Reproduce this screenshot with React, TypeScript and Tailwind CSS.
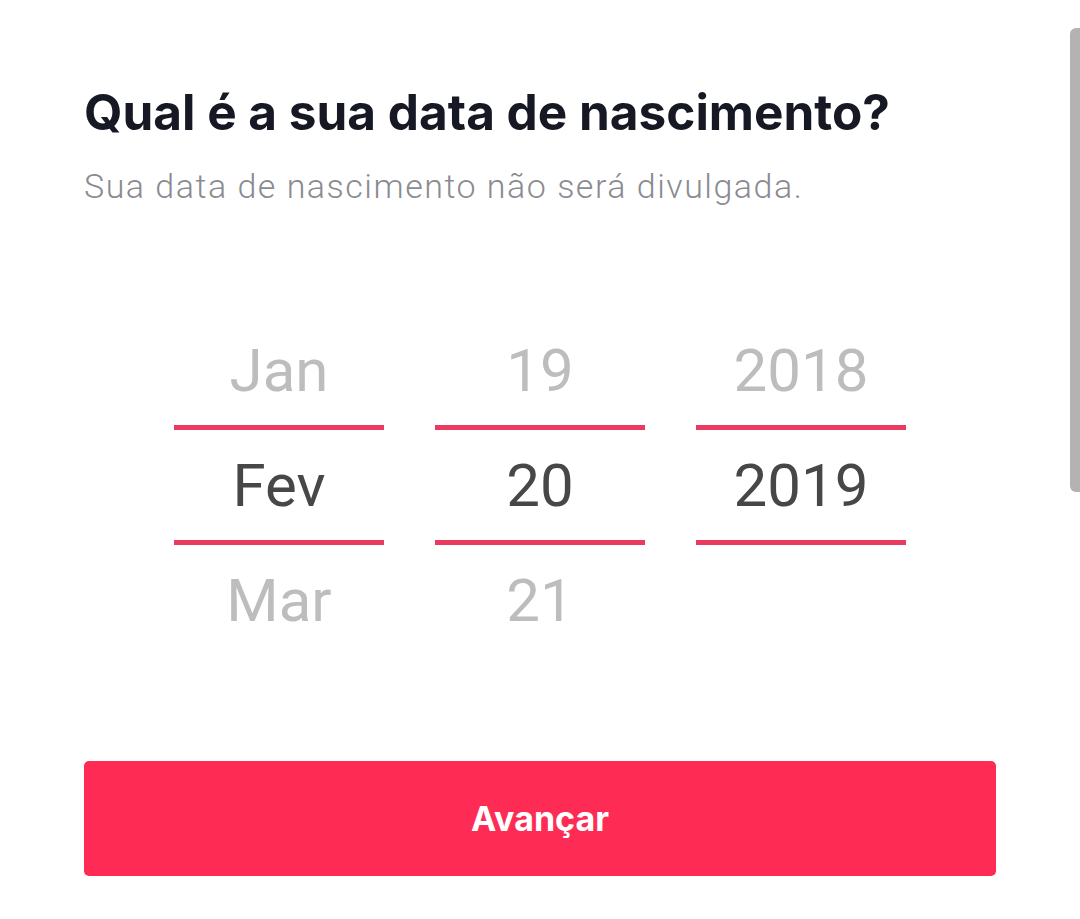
const columns = [
  { prev: 'Jan', current: 'Fev', next: 'Mar' },
  { prev: '19', current: '20', next: '21' },
  { prev: '2018', current: '2019', next: '' },
];

const PickerColumn = ({ prev, current, next }: { prev: string; current: string; next: string }) => (
  <div className="flex w-[210px] flex-col items-center">
    <div className="flex h-[110px] w-full items-center justify-center pt-[2px] text-[60px] text-[#bdbdbd]">{prev}</div>
    <div className="h-[5px] w-full bg-[#ea3a60]" />
    <div className="flex h-[110px] w-full items-center justify-center pt-[2px] text-[60px] text-[#474747]">{current}</div>
    <div className="h-[5px] w-full bg-[#ea3a60]" />
    <div className="flex h-[110px] w-full items-center justify-center pt-[2px] text-[60px] text-[#bdbdbd]">{next}</div>
  </div>
);

const App = () => {
  return (
    <div className="relative h-[919px] w-[1080px] overflow-hidden bg-white">
      {/* scrollbar */}
      <div className="absolute right-0 top-[28px] h-[464px] w-[10px] rounded-l-[6px] bg-[#b3b3b3]" />

      <div className="flex flex-col px-[84px] pt-[82px]">
        <h1 className="font-['Inter',sans-serif] text-[49.5px] font-bold leading-[60px] text-[#161823]">
          Qual é a sua data de nascimento?
        </h1>
        <p className="mt-[24px] font-['Roboto',sans-serif] text-[34px] font-light leading-[40px] tracking-[1.5px] text-[#8a8b91]">
          Sua data de nascimento não será divulgada.
        </p>

        <div className="mt-[109px] flex justify-center gap-[51px] font-['Roboto',sans-serif]">
          {columns.map((c) => (
            <PickerColumn key={c.current} {...c} />
          ))}
        </div>

        <button className="mt-[106px] flex h-[115px] w-full items-center justify-center rounded-[5px] bg-[#fe2c55] font-['Inter',sans-serif] text-[34px] font-bold text-white">
          Avançar
        </button>
      </div>
    </div>
  );
};

export default App;
